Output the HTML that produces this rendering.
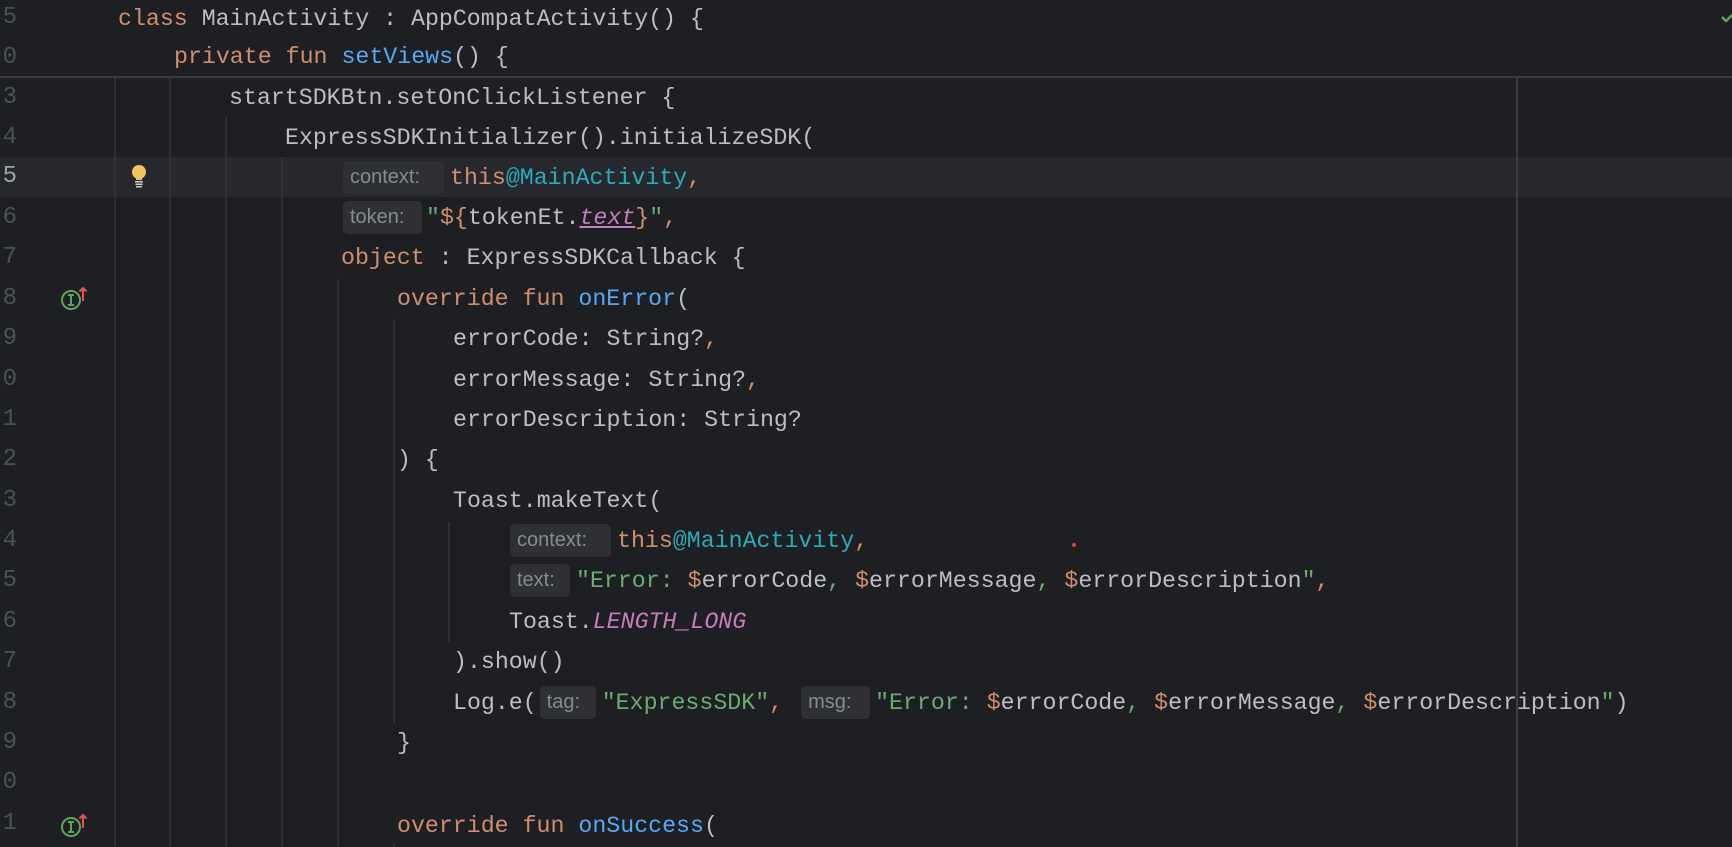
<!DOCTYPE html>
<html><head><meta charset="utf-8"><style>
html,body{margin:0;padding:0;background:#1e1f22;width:1732px;height:847px;overflow:hidden;position:relative}
.ln{position:absolute;left:0;width:17px;text-align:right;font:24px "Liberation Mono",monospace;line-height:40px;color:#4b5059;overflow:hidden;white-space:nowrap;direction:rtl}
.l{position:absolute;height:40px;font:23.25px "Liberation Mono",monospace;line-height:40px;color:#bcbec4;white-space:pre}
.k{color:#cf8e6d}.f{color:#56a8f5}.s{color:#6aab73}.t{color:#2aacb8}.p{color:#c77dbb;font-style:italic}
.h{display:inline-block;height:33px;background:#2e3034;border-radius:5px;color:#868a91;font:20px "Liberation Sans",sans-serif;line-height:33px;vertical-align:middle;box-sizing:border-box;padding-left:7px;position:relative;top:0px}
.g{position:absolute;width:2px;background:#2e3035}
</style></head><body>
<div style="position:absolute;left:0;top:157px;width:1732px;height:40px;background:#26282e"></div>
<div style="position:absolute;left:0;top:76px;width:1732px;height:2px;background:#393b40"></div>
<div class="g" style="left:1516px;top:78px;height:769px;background:#393b40"></div>
<div class="g" style="left:114px;top:78px;height:769px"></div>
<div class="g" style="left:169px;top:78px;height:769px"></div>
<div class="g" style="left:225px;top:117px;height:730px"></div>
<div class="g" style="left:281px;top:157px;height:690px"></div>
<div class="g" style="left:337px;top:279px;height:568px"></div>
<div class="g" style="left:393px;top:319px;height:404px"></div>
<div class="g" style="left:393px;top:843px;height:4px"></div>
<div class="g" style="left:448px;top:522px;height:121px"></div>

<div class="ln" style="top:-2px">5</div>
<div class="ln" style="top:38px">0</div>
<div class="ln" style="top:78px">3</div>
<div class="ln" style="top:118px">4</div>
<div class="ln" style="top:157px;color:#a1a3ab">5</div>
<div class="ln" style="top:198px">6</div>
<div class="ln" style="top:238px">7</div>
<div class="ln" style="top:279px">8</div>
<div class="ln" style="top:319px">9</div>
<div class="ln" style="top:360px">0</div>
<div class="ln" style="top:400px">1</div>
<div class="ln" style="top:440px">2</div>
<div class="ln" style="top:481px">3</div>
<div class="ln" style="top:521px">4</div>
<div class="ln" style="top:561px">5</div>
<div class="ln" style="top:602px">6</div>
<div class="ln" style="top:642px">7</div>
<div class="ln" style="top:683px">8</div>
<div class="ln" style="top:723px">9</div>
<div class="ln" style="top:763px">0</div>
<div class="ln" style="top:804px">1</div>

<svg style="position:absolute;left:128px;top:163px" width="22" height="26" viewBox="0 0 22 26"><circle cx="11" cy="9" r="7" fill="#f2c55c"/><rect x="8" y="13" width="6" height="4" fill="#f2c55c"/><rect x="7" y="18" width="8" height="1.5" fill="#cfd1d4"/><rect x="7.5" y="20.5" width="7" height="1.5" fill="#cfd1d4"/><rect x="8" y="23" width="6" height="1.5" fill="#cfd1d4"/></svg>
<svg style="position:absolute;left:60px;top:285px" width="30" height="28" viewBox="0 0 30 28"><circle cx="11" cy="15" r="9" fill="none" stroke="#5fa35f" stroke-width="2"/><path d="M8 10h6M8 20h6M11 10v10" stroke="#5fa35f" stroke-width="2" fill="none"/><path d="M23 16V3M19.5 6.5l3.5-3.5 3.5 3.5" stroke="#e05555" stroke-width="2" fill="none"/></svg>
<svg style="position:absolute;left:60px;top:812px" width="30" height="28" viewBox="0 0 30 28"><circle cx="11" cy="15" r="9" fill="none" stroke="#5fa35f" stroke-width="2"/><path d="M8 10h6M8 20h6M11 10v10" stroke="#5fa35f" stroke-width="2" fill="none"/><path d="M23 16V3M19.5 6.5l3.5-3.5 3.5 3.5" stroke="#e05555" stroke-width="2" fill="none"/></svg>
<svg style="position:absolute;left:1721px;top:12px" width="12" height="12" viewBox="0 0 12 12"><path d="M1 5l4 4 6-6" stroke="#5fa35f" stroke-width="2.5" fill="none"/></svg>
<div style="position:absolute;left:1072px;top:543px;width:4px;height:4px;border-radius:2px;background:#e0393e"></div>

<div class="l" style="left:118px;top:-1px"><span class="k">class</span> MainActivity : AppCompatActivity() {</div>
<div class="l" style="left:174px;top:37px"><span class="k">private fun</span> <span class="f">setViews</span>() {</div>
<div class="l" style="left:229px;top:78px">startSDKBtn.setOnClickListener {</div>
<div class="l" style="left:285px;top:118px">ExpressSDKInitializer().initializeSDK(</div>
<div class="l" style="left:343px;top:158px"><span class="h" style="width:101px;margin-right:6px">context:</span><span class="k">this</span><span class="t">@MainActivity</span><span class="k">,</span></div>
<div class="l" style="left:343px;top:198px"><span class="h" style="width:79px;margin-right:4px">token:</span><span class="s">"</span><span class="k">${</span>tokenEt.<span class="p" style="text-decoration:underline">text</span><span class="k">}</span><span class="s">"</span><span class="k">,</span></div>
<div class="l" style="left:341px;top:238px"><span class="k">object</span> : ExpressSDKCallback {</div>
<div class="l" style="left:397px;top:279px"><span class="k">override fun</span> <span class="f">onError</span>(</div>
<div class="l" style="left:453px;top:319px">errorCode: String?<span class="k">,</span></div>
<div class="l" style="left:453px;top:360px">errorMessage: String?<span class="k">,</span></div>
<div class="l" style="left:453px;top:400px">errorDescription: String?</div>
<div class="l" style="left:397px;top:440px">) {</div>
<div class="l" style="left:453px;top:481px">Toast.makeText(</div>
<div class="l" style="left:510px;top:521px"><span class="h" style="width:101px;margin-right:6px">context:</span><span class="k">this</span><span class="t">@MainActivity</span><span class="k">,</span></div>
<div class="l" style="left:510px;top:561px"><span class="h" style="width:60px;margin-right:6px">text:</span><span class="s">"Error: </span><span class="k">$</span>errorCode<span class="s">, </span><span class="k">$</span>errorMessage<span class="s">, </span><span class="k">$</span>errorDescription<span class="s">"</span><span class="k">,</span></div>
<div class="l" style="left:509px;top:602px">Toast.<span class="p">LENGTH_LONG</span></div>
<div class="l" style="left:453px;top:642px">).show()</div>
<div class="l" style="left:453px;top:683px">Log.e(<span class="h" style="width:56px;margin-left:3px;margin-right:6px">tag:</span><span class="s">"ExpressSDK"</span><span class="k">,</span> <span class="h" style="width:69px;margin-left:4px;margin-right:5px">msg:</span><span class="s">"Error: </span><span class="k">$</span>errorCode<span class="s">, </span><span class="k">$</span>errorMessage<span class="s">, </span><span class="k">$</span>errorDescription<span class="s">"</span>)</div>
<div class="l" style="left:397px;top:723px">}</div>
<div class="l" style="left:397px;top:806px"><span class="k">override fun</span> <span class="f">onSuccess</span>(</div>
</body></html>
